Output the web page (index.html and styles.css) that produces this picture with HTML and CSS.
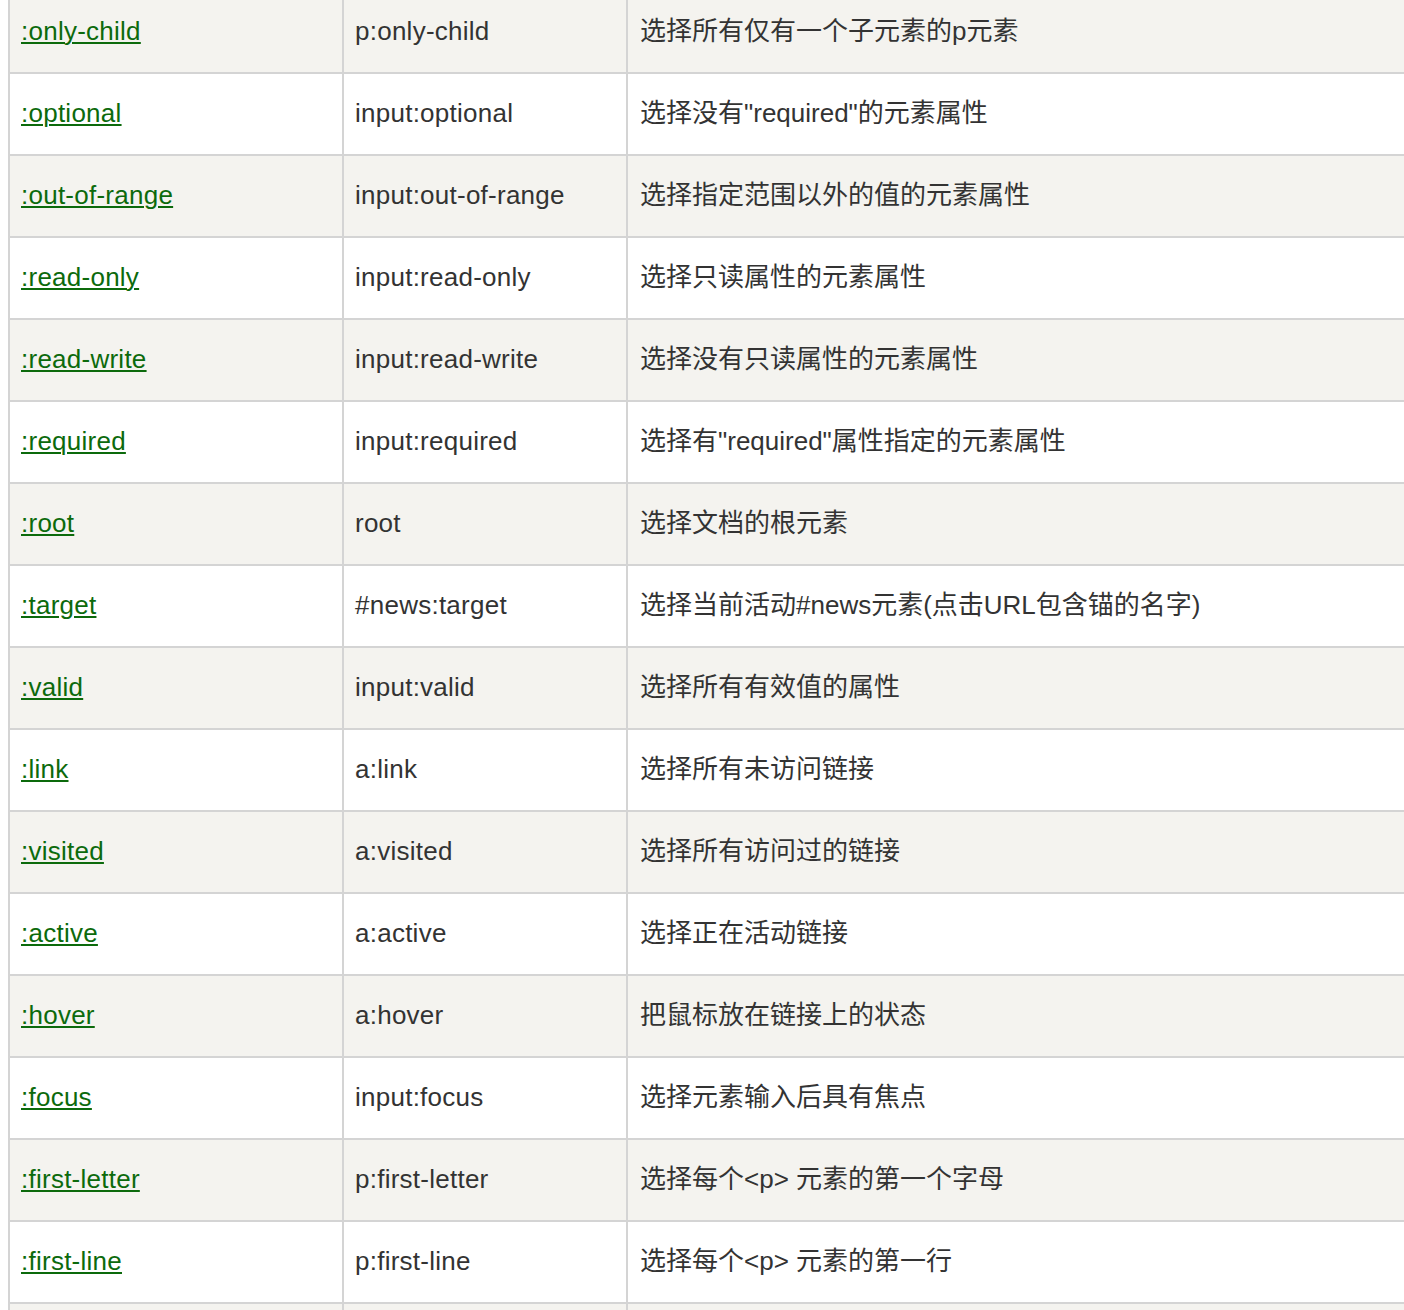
FILE: index.html
```html
<!DOCTYPE html>
<html lang="zh-CN">
<head>
<meta charset="utf-8">
<title>CSS 选择器</title>
<link rel="stylesheet" href="styles.css">
</head>
<body>
<div class="wrap">
<table class="ref">
<tbody>
<tr class="alt"><td class="c1"><a href="#">:only-child</a></td><td class="c2">p:only-child</td><td class="c3">选择所有仅有一个子元素的p元素</td></tr>
<tr><td class="c1"><a href="#">:optional</a></td><td class="c2">input:optional</td><td class="c3">选择没有"required"的元素属性</td></tr>
<tr class="alt"><td class="c1"><a href="#">:out-of-range</a></td><td class="c2">input:out-of-range</td><td class="c3">选择指定范围以外的值的元素属性</td></tr>
<tr><td class="c1"><a href="#">:read-only</a></td><td class="c2">input:read-only</td><td class="c3">选择只读属性的元素属性</td></tr>
<tr class="alt"><td class="c1"><a href="#">:read-write</a></td><td class="c2">input:read-write</td><td class="c3">选择没有只读属性的元素属性</td></tr>
<tr><td class="c1"><a href="#">:required</a></td><td class="c2">input:required</td><td class="c3">选择有"required"属性指定的元素属性</td></tr>
<tr class="alt"><td class="c1"><a href="#">:root</a></td><td class="c2">root</td><td class="c3">选择文档的根元素</td></tr>
<tr><td class="c1"><a href="#">:target</a></td><td class="c2">#news:target</td><td class="c3">选择当前活动#news元素(点击URL包含锚的名字)</td></tr>
<tr class="alt"><td class="c1"><a href="#">:valid</a></td><td class="c2">input:valid</td><td class="c3">选择所有有效值的属性</td></tr>
<tr><td class="c1"><a href="#">:link</a></td><td class="c2">a:link</td><td class="c3">选择所有未访问链接</td></tr>
<tr class="alt"><td class="c1"><a href="#">:visited</a></td><td class="c2">a:visited</td><td class="c3">选择所有访问过的链接</td></tr>
<tr><td class="c1"><a href="#">:active</a></td><td class="c2">a:active</td><td class="c3">选择正在活动链接</td></tr>
<tr class="alt"><td class="c1"><a href="#">:hover</a></td><td class="c2">a:hover</td><td class="c3">把鼠标放在链接上的状态</td></tr>
<tr><td class="c1"><a href="#">:focus</a></td><td class="c2">input:focus</td><td class="c3">选择元素输入后具有焦点</td></tr>
<tr class="alt"><td class="c1"><a href="#">:first-letter</a></td><td class="c2">p:first-letter</td><td class="c3">选择每个&lt;p&gt; 元素的第一个字母</td></tr>
<tr><td class="c1"><a href="#">:first-line</a></td><td class="c2">p:first-line</td><td class="c3">选择每个&lt;p&gt; 元素的第一行</td></tr>
<tr class="alt"><td class="c1"></td><td class="c2"></td><td class="c3"></td></tr>
</tbody>
</table>
</div>
</body>
</html>
```
FILE: styles.css
```css
html, body {
  margin: 0;
  padding: 0;
  background: #ffffff;
}

.wrap {
  width: 100%;
  height: 1310px;
  overflow: hidden;
}

.ref {
  margin: -10px 0 0 8px;
  width: 1500px;
  border-collapse: separate;
  border-spacing: 0;
  border-top: 2px solid #d4d4d4;
  table-layout: fixed;
  font-family: "Liberation Sans", Arial, "Noto Sans CJK SC", sans-serif;
  font-size: 26px;
  line-height: 30px;
  color: #333333;
}

.ref tr {
  background: #ffffff;
}

.ref tr.alt {
  background: #f4f3ef;
}

.ref td {
  height: 78px;
  padding: 0 11px 2px;
  border-right: 2px solid #d4d4d4;
  border-bottom: 2px solid #d4d4d4;
  vertical-align: middle;
  white-space: nowrap;
  letter-spacing: 0.25px;
  box-sizing: content-box;
}

.ref td.c1 {
  border-left: 2px solid #d4d4d4;
  width: 310px;
}

.ref td.c2 {
  width: 260px;
}

.ref td.c3 {
  padding-left: 12px;
  letter-spacing: 0;
}

.ref a {
  color: #0c6a0c;
  text-decoration: underline;
  text-underline-offset: 2px;
  text-decoration-thickness: 2px;
}
```
